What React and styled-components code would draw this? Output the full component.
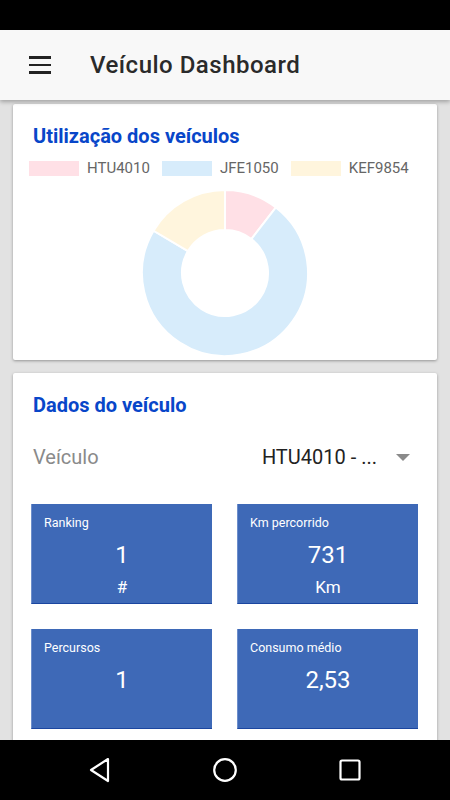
import React from 'react';
import styled, { createGlobalStyle } from 'styled-components';

const Global = createGlobalStyle`
  html, body {
    margin: 0;
    padding: 0;
    background: #e2e2e2;
  }
  * { box-sizing: border-box; }
`;

const Screen = styled.div`
  width: 450px;
  height: 800px;
  display: flex;
  flex-direction: column;
  overflow: hidden;
  font-family: Roboto, "Noto Sans", sans-serif;
  background: #e2e2e2;
`;

const StatusBar = styled.div`
  height: 30px;
  flex: none;
  background: #000;
`;

const AppBar = styled.header`
  height: 70px;
  flex: none;
  display: flex;
  align-items: center;
  background: #f8f8f8;
  box-shadow: 0 2px 4px rgba(0, 0, 0, 0.28);
  position: relative;
  z-index: 2;
`;

const Menu = styled.div`
  width: 22px;
  margin-left: 29px;
  display: flex;
  flex-direction: column;
  gap: 5px;

  span {
    display: block;
    height: 2.4px;
    background: #222;
  }
`;

const Title = styled.h1`
  margin: 0 0 0 39px;
  font-size: 24px;
  font-weight: 500;
  color: #2a2a2a;
  letter-spacing: 0.5px;
`;

const Content = styled.main`
  flex: 1;
  overflow: hidden;
  padding: 4px 13px 0;
  display: flex;
  flex-direction: column;
  gap: 13px;
`;

const Card = styled.section`
  flex: none;
  background: #fff;
  border-radius: 2px;
  box-shadow: 0 1px 3px rgba(0, 0, 0, 0.35);
  padding: ${p => p.$pad};
  height: ${p => p.$h};
`;

const CardTitle = styled.h2`
  margin: 0 0 0 20px;
  font-size: 20px;
  line-height: 24px;
  font-weight: 700;
  color: #0846c9;
`;

const Legend = styled.div`
  display: flex;
  gap: 12px;
  margin: 11px 0 0 16px;
`;

const LegendItem = styled.div`
  display: flex;
  align-items: center;
  gap: 8px;
  font-size: 15px;
  color: #666;
`;

const Swatch = styled.span`
  width: 50px;
  height: 15px;
  background: ${p => p.$c};
`;

const ChartBox = styled.div`
  display: flex;
  justify-content: center;
  margin-top: 12px;
`;

const SelectRow = styled.div`
  display: flex;
  align-items: center;
  margin: 26px 19px 0 20px;
  height: 28px;
  font-size: 20px;
`;

const SelectLabel = styled.span`
  color: #8a8a8a;
  flex: 1;
`;

const SelectValue = styled.span`
  color: #222;
  margin-right: 19px;
`;

const Arrow = styled.span`
  width: 0;
  height: 0;
  border-left: 7px solid transparent;
  border-right: 7px solid transparent;
  border-top: 7px solid #8a8a8a;
  margin-right: 8px;
`;

const Tiles = styled.div`
  display: grid;
  grid-template-columns: 181px 181px;
  grid-auto-rows: 100px;
  gap: 25px;
  margin: 33px 0 0 18px;
`;

const Tile = styled.div`
  background: #3e69b7;
  border-left: 1px solid #6d8ecb;
  border-bottom: 1.5px solid #1b46a0;
  color: #fff;
  display: flex;
  flex-direction: column;
  padding: 11px 0 0 12px;
`;

const TileLabel = styled.div`
  font-size: 12.5px;
  line-height: 16px;
`;

const TileValue = styled.div`
  font-size: 24px;
  line-height: 30px;
  text-align: center;
  margin: 9px 0 0 -12px;
`;

const TileUnit = styled.div`
  font-size: 17px;
  line-height: 20px;
  text-align: center;
  margin: 7px 0 0 -12px;
`;

const NavBar = styled.nav`
  height: 60px;
  flex: none;
  background: #000;
  display: flex;
  justify-content: center;
  align-items: center;
  gap: 100px;
  position: relative;
  z-index: 3;
`;

const slices = [
  { c: '#ffe0e6', v: 10.5 },
  { c: '#d7ecfb', v: 73 },
  { c: '#fff5dd', v: 16.5 },
];

const pt = (a, r, c) => [c + r * Math.sin(a), c - r * Math.cos(a)];

const Donut = () => {
  const c = 84, R = 83, r = 43;
  let start = 0;
  return (
    <svg width="168" height="168" viewBox="0 0 168 168">
      {slices.map((s, i) => {
        const end = start + (s.v / 100) * Math.PI * 2;
        const large = end - start > Math.PI ? 1 : 0;
        const [x1, y1] = pt(start, R, c);
        const [x2, y2] = pt(end, R, c);
        const [x3, y3] = pt(end, r, c);
        const [x4, y4] = pt(start, r, c);
        const d = `M${x1} ${y1} A${R} ${R} 0 ${large} 1 ${x2} ${y2} L${x3} ${y3} A${r} ${r} 0 ${large} 0 ${x4} ${y4} Z`;
        start = end;
        return <path key={i} d={d} fill={s.c} stroke="#fff" strokeWidth="2" />;
      })}
    </svg>
  );
};

const tiles = [
  { label: 'Ranking', value: '1', unit: '#' },
  { label: 'Km percorrido', value: '731', unit: 'Km' },
  { label: 'Percursos', value: '1' },
  { label: 'Consumo médio', value: '2,53' },
];

const App = () => (
  <Screen>
    <Global />
    <StatusBar />
    <AppBar>
      <Menu><span /><span /><span /></Menu>
      <Title>Veículo Dashboard</Title>
    </AppBar>
    <Content>
      <Card $pad="20px 0 0" $h="256px">
        <CardTitle>Utilização dos veículos</CardTitle>
        <Legend>
          <LegendItem><Swatch $c="#ffe0e6" />HTU4010</LegendItem>
          <LegendItem><Swatch $c="#d7ecfb" />JFE1050</LegendItem>
          <LegendItem><Swatch $c="#fff5dd" />KEF9854</LegendItem>
        </Legend>
        <ChartBox><Donut /></ChartBox>
      </Card>
      <Card $pad="20px 0 40px" $h="auto">
        <CardTitle>Dados do veículo</CardTitle>
        <SelectRow>
          <SelectLabel>Veículo</SelectLabel>
          <SelectValue>HTU4010 - ...</SelectValue>
          <Arrow />
        </SelectRow>
        <Tiles>
          {tiles.map(t => (
            <Tile key={t.label}>
              <TileLabel>{t.label}</TileLabel>
              <TileValue>{t.value}</TileValue>
              {t.unit && <TileUnit>{t.unit}</TileUnit>}
            </Tile>
          ))}
        </Tiles>
      </Card>
    </Content>
    <NavBar>
      <svg width="24" height="26" viewBox="0 0 24 26">
        <path d="M20 2 L3 13 L20 24 Z" fill="none" stroke="#fff" strokeWidth="2.2" strokeLinejoin="round" />
      </svg>
      <svg width="26" height="26" viewBox="0 0 26 26">
        <circle cx="13" cy="13" r="10.8" fill="none" stroke="#fff" strokeWidth="2.2" />
      </svg>
      <svg width="24" height="24" viewBox="0 0 24 24">
        <rect x="2.5" y="2.5" width="19" height="19" rx="1.5" fill="none" stroke="#fff" strokeWidth="2.2" />
      </svg>
    </NavBar>
  </Screen>
);

export default App;
